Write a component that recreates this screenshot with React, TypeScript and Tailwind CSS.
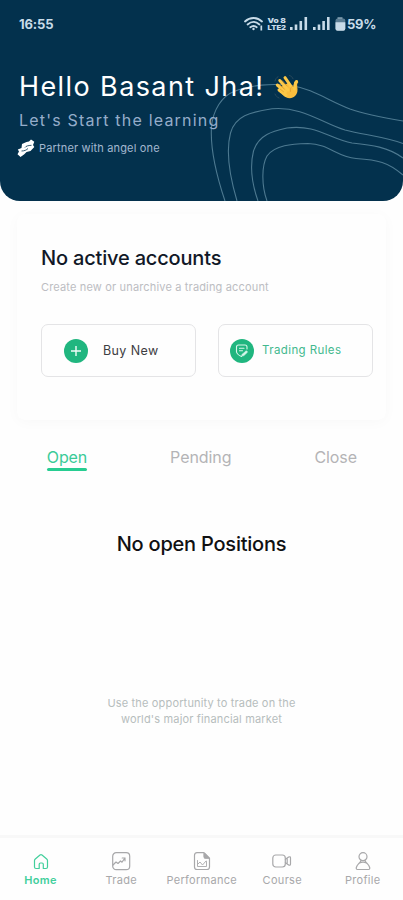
import React from "react";

function Waves() {
  return (
    <svg className="absolute inset-0 h-[201px] w-[403px]" viewBox="0 0 403 201" fill="none" stroke="#4d7990" strokeWidth="1.1">
      <path d="M225 201C216 174 210 150 211.500 127C213 110 222 96 234 91.500C250 85 272 83 291 85.500C313 89 327 100 350 109C367 115 385 118 403 121" />
      <path d="M237 201C229 174 226 150 230.500 133C235 116 250 112 272 108.800C302 106 322 123 345 130C365 135 385 137 403 143.500" />
      <path d="M258 201C252 184 250 165 253.500 151C259 134 274 131 287 128C316 124 330 139 352 143C372 145 388 147 403 158" />
      <path d="M267 201C261 184 262 165 267 156C275 145 292 144 308 143.500C329 144 337 157 356 158.500C378 160 388 162 403 175" />
    </svg>
  );
}

function WavingHand() {
  return (
    <svg className="h-[26px] w-[26px]" viewBox="0 0 26 26" fill="none">
      <path d="M22.500 8C20.500 9.500 21.800 12 21.700 15" stroke="#f5b437" strokeLinecap="round" strokeWidth="3.400" />
      <path d="M7 13 15 8.500 19 12.500C24.500 12 24.500 18 21.500 21.500C17.500 26 12 24.500 8.500 20.500Z" fill="#f9bd3d" />
      <g stroke="#fcc847" strokeLinecap="round" strokeWidth="3">
        <path d="M5.800 6.500 14 16M11 3.700 17.500 13M3.300 11 11.500 18M5 16 12 21.500M22.500 7.500C20.500 9 21.500 12 20.500 15" />
      </g>
      <path d="M8.300 6.700 13 12M5.600 10.900 10.500 15.200M6.300 15.200 9.500 17.700M16.500 17.500C16 14.500 17 12.500 19.300 11.800" stroke="#e09a2b" strokeWidth=".7" strokeLinecap="round" />
      <path d="M1 7C1.300 5 2.500 3.500 4 2.800M15.500 1.500C17.500 2.200 18.500 3.300 19 4.800M1 20C1.800 22 3 23.200 5 24" stroke="#29495c" strokeWidth="1" strokeLinecap="round" />
    </svg>
  );
}

function StatusIcons() {
  return (
    <div className="flex items-center text-[#c8dbe8]">
      <svg className="h-4 w-[103px]" viewBox="0 0 103 16" fill="none" stroke="currentColor">
        <g strokeWidth="1.800" strokeLinecap="round">
          <path d="M1 5.500C6 .8 13 .8 18 5.500M3.600 8.500C7.500 5 11.500 5 15.400 8.500M6.300 11.300C8.500 9.500 10.500 9.500 12.700 11.300" />
        </g>
        <circle cx="9.500" cy="13" r="1.200" fill="currentColor" stroke="none" />
        <path d="M17.300 9.500V14.500" strokeWidth="1.700" />
        <g fill="currentColor" stroke="none" fontFamily="Inter, sans-serif" fontWeight="900" fontSize="6.200">
          <text x="23.500" y="6.500" textLength="18.500" lengthAdjust="spacingAndGlyphs">Vo 8</text>
          <text x="23.500" y="14" textLength="18.500" lengthAdjust="spacingAndGlyphs">LTE2</text>
        </g>
        <g fill="currentColor" stroke="none">
          <path d="M46 11h2.600v3H46zM50.700 8.500h2.600V14h-2.600zM55.500 5h2.600v9h-2.600zM60.500 1h2.600v13h-2.600z" />
          <path d="M69 11h2.600v3H69zM73.700 8.500h2.600V14h-2.600zM78.300 5h2.600v9h-2.600zM83 1h2.600v13H83z" />
          <path d="M93.500 1h5v2h-5z" opacity=".5" />
          <rect x="91.500" y="2.500" width="9.800" height="12" rx="2" opacity=".45" />
          <path d="M91.500 6.300h9.800v6.500q0 2-2 2h-5.800q-2 0-2-2z" />
        </g>
      </svg>
      <span className="w-[31px] text-[13px] leading-4 font-bold tracking-[-0.2px] whitespace-nowrap">59%</span>
    </div>
  );
}

function PartnerLogo() {
  return (
    <svg className="h-[18px] w-[18px]" viewBox="0 0 18 18" fill="white">
      <path d="M5 5 9.500 3 12 2.500 14 .5 17.300 2.800 16 6 17.300 8 13.500 12 9.500 13 7 15.500 3.500 18 .5 15.300 2 12.500 .8 10.500 4.500 9Z" />
      <path d="M8 8.500C9 7 11 6.500 14.500 6.300M4.500 12C7.500 12 9.500 11 11 9.500" fill="none" stroke="#03314d" strokeWidth=".8" />
    </svg>
  );
}

function RulesIcon() {
  return (
    <svg className="h-6 w-6 shrink-0" viewBox="0 0 24 24" fill="none" stroke="#d9f7ec" strokeWidth="1.100" strokeLinecap="round" strokeLinejoin="round">
      <circle cx="12" cy="12" r="12" fill="#20b67f" stroke="none" />
      <path d="M17 10V8Q17 6 15 6H8.500Q6.500 6 6.500 8V13Q7 15.500 11.500 17.500M9.500 9.200H14M9.500 11.800H12.500" />
      <path d="m12.300 15.200 4-3.500 1.300 1.400-3.700 3.500-2 .5Z" fill="#d9f7ec" strokeWidth=".6" />
    </svg>
  );
}

const iconProps = {
  className: "h-5 w-5",
  viewBox: "0 0 20 20",
  fill: "none",
  stroke: "currentColor",
  strokeWidth: 1.2,
  strokeLinecap: "round" as const,
  strokeLinejoin: "round" as const,
};

const HomeIcon = () => (
  <svg {...iconProps}>
    <path d="M5 17.500Q3.500 17.500 3.500 16V9.500Q3.500 8.700 4.300 8L9 4Q10 3.200 11 4L15.700 8Q16.500 8.700 16.500 9.500V16Q16.500 17.500 15 17.500H12.300V13.300Q12.300 12 11 12H9.500Q8.200 12 8.200 13.300V17.500Z" />
  </svg>
);
const TradeIcon = () => (
  <svg {...iconProps}>
    <rect x="1.700" y="1.700" width="17" height="17" rx="3.500" />
    <path d="m2 14 3-3 2 1.500L9.500 10l1.500 1.200 3-4.200M11.200 7H14v2.800" />
  </svg>
);
const PerformanceIcon = () => (
  <svg {...iconProps}>
    <path d="M12 1.700H5Q2.500 1.700 2.500 4.200V16Q2.500 18.500 5 18.500H15Q17.500 18.500 17.500 16V7.200ZM12 1.700V5.500Q12 7.200 13.700 7.200H17.500" />
    <path d="M5.500 9.500V15.500H14.500V10.500M6 13l2-2 2.500 3 3.500-4" strokeWidth=".9" />
    <path d="M12.500 2.500 16.800 7H13Q12.500 7 12.500 6Z" fill="currentColor" />
  </svg>
);
const CourseIcon = () => (
  <svg {...iconProps}>
    <rect x=".8" y="4" width="12.500" height="12" rx="3" />
    <path d="m13.400 8.300 3.200-2.200q1.900-1 1.900.8v6.200q0 1.800-1.900.8l-3.200-2.200M15.200 7.800V12" />
  </svg>
);
const ProfileIcon = () => (
  <svg {...iconProps}>
    <circle cx="10" cy="5.700" r="4" />
    <path d="M8 9.300C8 11 6.800 11.500 5.500 12.800C4.300 14 3.800 15 3.300 16.500Q3 18.500 4.500 18.500H15.500Q17 18.500 16.700 16.500C16.200 15 15.700 14 14.500 12.800C13.200 11.500 12 11 12 9.300M6.500 12Q10 10.200 13.500 12" />
  </svg>
);

const nav = [
  { label: "Home", Icon: HomeIcon },
  { label: "Trade", Icon: TradeIcon },
  { label: "Performance", Icon: PerformanceIcon },
  { label: "Course", Icon: CourseIcon },
  { label: "Profile", Icon: ProfileIcon },
];

export default function App() {
  return (
    <div className="flex h-[900px] w-[403px] flex-col overflow-hidden bg-[#fefefe] font-['Inter',sans-serif]">
      <header className="relative h-[201px] shrink-0 overflow-hidden rounded-b-[20px] bg-[#03314d]">
        <Waves />
        <div className="relative flex h-full flex-col pl-[19px]">
          <div className="mt-4 flex h-4 items-center justify-between pr-[25px]">
            <span className="text-[13px] leading-4 font-bold tracking-[-0.1px] text-[#c8dbe8]">16:55</span>
            <StatusIcons />
          </div>
          <div className="mt-[39px] flex h-8 items-center">
            <h1 className="w-[255px] text-[27px] leading-8 tracking-[1.4px] whitespace-nowrap text-white">Hello Basant Jha!</h1>
            <WavingHand />
          </div>
          <p className="mt-[7px] text-[16px] leading-5 tracking-[1.2px] text-[#95adca]">Let's Start the learning</p>
          <div className="mt-[9px] -ml-[2px] flex h-[18px] items-center gap-[4px]">
            <PartnerLogo />
            <span className="text-[11px] leading-4 tracking-[0.160px] text-[#a3b8d0]">Partner with angel one</span>
          </div>
        </div>
      </header>

      <section className="mx-[17px] mt-[13px] flex h-[206px] shrink-0 flex-col rounded-lg bg-[#fefefe] px-6 pt-8 shadow-[0_2px_14px_rgba(0,0,0,0.028)]">
        <h2 className="text-[20px] leading-6 font-medium tracking-[-0.18px] whitespace-nowrap text-[#111827]">No active accounts</h2>
        <p className="mt-[9px] text-[11px] leading-4 tracking-[0.16px] whitespace-nowrap text-[#bcbdc2]">Create new or unarchive a trading account</p>
        <div className="mt-[29px] flex w-[332px] justify-between">
          <button className="flex h-[53px] w-[155px] items-center rounded-[7px] border-[1.5px] border-[#e4e4e6] pl-[22px]">
            <svg className="h-6 w-6" viewBox="0 0 24 24"><circle cx="12" cy="12" r="12" fill="#20b67f" /><path d="M12 7V17M7 12H17" stroke="#effcf7" strokeWidth="1.400" /></svg>
            <span className="ml-[15px] text-[12.500px] leading-4 tracking-[0.4px] whitespace-nowrap text-[#3d3d42]">Buy New</span>
          </button>
          <button className="flex h-[53px] w-[155px] items-center rounded-[7px] border-[1.5px] border-[#e4e4e6] pl-[11px]">
            <RulesIcon />
            <span className="-mt-px ml-[8px] text-[11.500px] leading-4 tracking-[0.4px] whitespace-nowrap text-[#43b98e]">Trading Rules</span>
          </button>
        </div>
      </section>

      <nav className="mt-[26px] flex h-6 shrink-0 justify-between pr-[46px] pl-[47px] text-[16px] leading-[22px] tracking-[-0.08px] text-[#b4b4b6]">
        <span className="flex h-[25px] w-10 flex-col items-center text-[#3acb98]">Open<i className="h-[3px] w-10 shrink-0 rounded-full bg-[#27cd91]" /></span>
        <span>Pending</span>
        <span>Close</span>
      </nav>

      <main className="flex flex-1 flex-col items-center pt-[62px]">
        <h2 className="text-[20px] leading-6 font-medium tracking-[-0.22px] text-[#101012]">No open Positions</h2>
        <p className="mt-[139px] text-center text-[11px] leading-4 tracking-[0.16px] text-[#b6bdbd]">Use the opportunity to trade on the<br />world's major financial market</p>
      </main>

      <footer className="flex h-[65px] shrink-0 border-t-[3px] border-[#f8f8f8]">
        {nav.map(({ label, Icon }, i) => (
          <div key={label} className={i === 0 ? "flex w-[81px] shrink-0 flex-col items-center pt-[13px] text-[#42cf9c]" : "flex min-w-0 flex-1 flex-col items-center pt-[13px] text-[#a8a8aa]"}>
            <Icon />
            <span className={i === 0 ? "mt-px text-[11px] leading-4 font-semibold tracking-[0.3px]" : "mt-px text-[11px] leading-4 tracking-[0.3px]"}>{label}</span>
          </div>
        ))}
      </footer>
    </div>
  );
}
